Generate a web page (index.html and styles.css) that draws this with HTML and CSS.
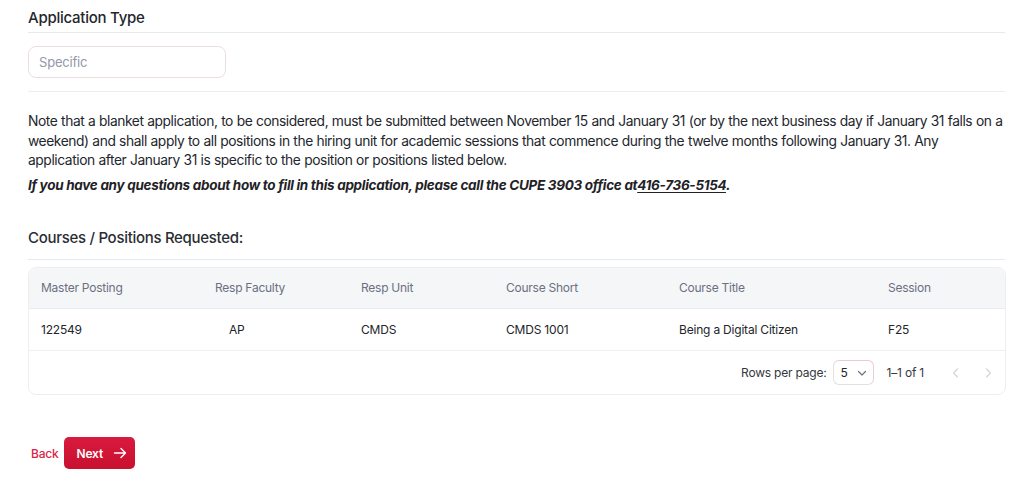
FILE: index.html
```html
<!DOCTYPE html>
<html lang="en">
<head>
<meta charset="utf-8">
<title>Application</title>
<link rel="stylesheet" href="styles.css">
</head>
<body>
<main class="page">
  <section class="section">
    <h2 class="section-title">Application Type</h2>
    <div class="field-row">
      <div class="input">Specific</div>
    </div>
  </section>

  <section class="note">
    <p class="note-text">Note that a blanket application, to be considered, must be submitted between November 15 and January 31 (or by the next business day if January 31 falls on a weekend) and shall apply to all positions in the hiring unit for academic sessions that commence during the twelve months following January 31. Any application after January 31 is specific to the position or positions listed below.</p>
    <p class="note-em">If you have any questions about how to fill in this application, please call the CUPE 3903 office at<a class="phone" href="#">416-736-5154</a>.</p>
  </section>

  <section class="courses">
    <h3 class="courses-title">Courses / Positions Requested:</h3>
    <div class="card">
      <table class="grid">
        <colgroup>
          <col class="c1"><col class="c2"><col class="c3"><col class="c4"><col class="c5"><col class="c6">
        </colgroup>
        <thead>
          <tr>
            <th>Master Posting</th>
            <th>Resp Faculty</th>
            <th>Resp Unit</th>
            <th>Course Short</th>
            <th>Course Title</th>
            <th>Session</th>
          </tr>
        </thead>
        <tbody>
          <tr>
            <td>122549</td>
            <td class="indent">AP</td>
            <td>CMDS</td>
            <td>CMDS 1001</td>
            <td>Being a Digital Citizen</td>
            <td>F25</td>
          </tr>
        </tbody>
      </table>
      <div class="pager">
        <span class="pager-label">Rows per page:</span>
        <div class="select">
          <span>5</span>
          <svg width="12" height="12" viewBox="0 0 12 12" fill="none" stroke="#6b7280" stroke-width="1.2" stroke-linecap="round" stroke-linejoin="round"><path d="M2.5 4.5 6 8l3.5-3.5"/></svg>
        </div>
        <span class="pager-count">1–1 of 1</span>
        <span class="pager-nav">
          <svg width="14" height="14" viewBox="0 0 14 14" fill="none" stroke="#d1d5db" stroke-width="1.2" stroke-linecap="round" stroke-linejoin="round"><path d="M8.5 3 4.5 7l4 4"/></svg>
          <svg width="14" height="14" viewBox="0 0 14 14" fill="none" stroke="#d1d5db" stroke-width="1.2" stroke-linecap="round" stroke-linejoin="round"><path d="M5.5 3l4 4-4 4"/></svg>
        </span>
      </div>
    </div>
  </section>

  <nav class="actions">
    <a class="back" href="#">Back</a>
    <button class="next" type="button">Next
      <svg width="16" height="16" viewBox="0 0 16 16" fill="none" stroke="#fff" stroke-width="1.4" stroke-linecap="round" stroke-linejoin="round"><path d="M2.5 8h11M9 3.5 13.5 8 9 12.5"/></svg>
    </button>
  </nav>
</main>
</body>
</html>
```

FILE: styles.css
```css
* { box-sizing: border-box; }
html, body { margin: 0; padding: 0; background: #fff; }
body {
  font-family: Inter, "Noto Sans", "Liberation Sans", sans-serif;
  color: #1f2227;
  font-size: 14px;
}
.page {
  width: 977px;
  margin-left: 28px;
  padding-top: 7px;
}
.section-title {
  margin: 0;
  font-size: 15px;
  font-weight: 500;
  line-height: 22px;
  letter-spacing: -0.25px;
  color: #23262d;
  padding-bottom: 3px;
  border-bottom: 1px solid #e8e9ee;
}
.field-row {
  padding: 13px 0 13px;
  border-bottom: 1px solid #eceef2;
}
.input {
  width: 198px;
  height: 32px;
  border: 1px solid #ecdde1;
  border-radius: 8px;
  padding: 0 10px;
  display: flex;
  align-items: center;
  font-size: 13px;
  letter-spacing: -0.2px;
  color: #9298a8;
}
.note { padding-top: 20px; }
.note-text {
  margin: 0;
  line-height: 19.5px;
  font-size: 13.8px;
  color: #23262c;
  letter-spacing: -0.42px;
  word-spacing: 0.2px;
}
.note-em {
  margin: 5px 0 0;
  font-style: italic;
  font-weight: 700;
  font-size: 13.5px;
  line-height: 19px;
  letter-spacing: -0.3px;
  color: #1f2227;
}
.phone { color: inherit; text-decoration: underline; text-underline-offset: 2px; }
.courses { padding-top: 32px; }
.courses-title {
  margin: 0;
  font-size: 15px;
  font-weight: 500;
  line-height: 22px;
  letter-spacing: -0.3px;
  color: #2a2d34;
  padding-bottom: 10px;
  border-bottom: 1px solid #e8e9ee;
}
.card {
  margin-top: 7px;
  border: 1px solid #eceef1;
  border-radius: 8px;
  overflow: hidden;
  width: 978px;
}
.grid { width: 100%; border-collapse: collapse; table-layout: fixed; }
.c1 { width: 174px; } .c2 { width: 146px; } .c3 { width: 145px; }
.c4 { width: 173px; } .c5 { width: 209px; } .c6 { width: auto; }
thead tr { background: #f5f6f8; }
th {
  height: 41px;
  text-align: left;
  font-weight: 400;
  font-size: 12px;
  letter-spacing: -0.25px;
  color: #6b7080;
  padding: 0 12px;
  border-bottom: 1px solid #e9ebef;
}
td {
  height: 42px;
  font-size: 12px;
  letter-spacing: -0.2px;
  color: #22252b;
  padding: 0 12px;
  border-bottom: 1px solid #eef0f3;
}
td.indent { padding-left: 26px; }
.pager {
  height: 43px;
  display: flex;
  align-items: center;
  justify-content: flex-end;
  padding-right: 10px;
  font-size: 12px;
  letter-spacing: -0.2px;
  color: #34373e;
}
.select {
  margin-left: 6px;
  width: 41px;
  height: 25px;
  border: 1px solid #e6dfe2;
  border-top-color: #efc9d1;
  border-right-color: #efc9d1;
  border-radius: 6px;
  display: flex;
  align-items: center;
  justify-content: space-between;
  padding: 0 5px 0 7px;
  font-size: 12px;
  color: #22252b;
}
.pager-count { margin-left: 13px; }
.pager-nav { display: flex; gap: 18px; margin-left: 25px; }
.actions {
  display: flex;
  align-items: center;
  gap: 5px;
  margin-top: 42px;
  margin-left: 3px;
}
.back {
  color: #dc2448;
  font-size: 12px;
  font-weight: 500;
  letter-spacing: -0.2px;
  text-decoration: none;
}
.next {
  display: flex;
  align-items: center;
  gap: 9px;
  height: 32px;
  width: 71px;
  padding: 0 0 0 13px;
  border: 0;
  border-radius: 5px;
  background: linear-gradient(#d81a3e, #c8102f);
  color: #fff;
  font-family: inherit;
  font-size: 12px;
  font-weight: 600;
  letter-spacing: -0.2px;
}
```
